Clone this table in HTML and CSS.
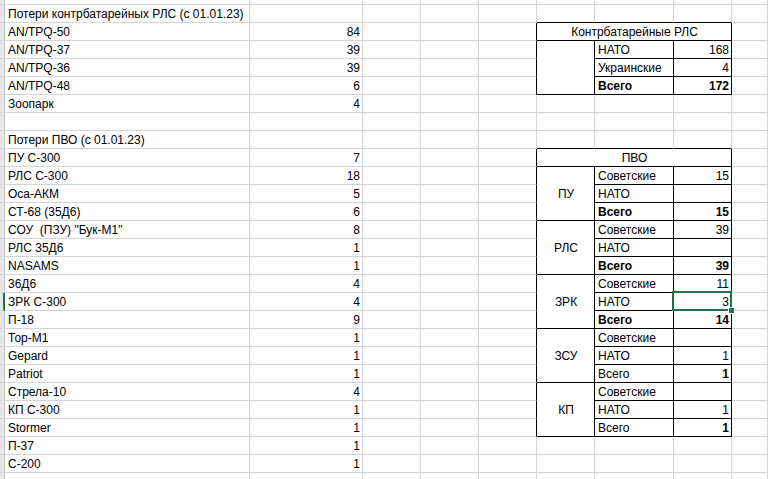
FILE: index.html
```html
<!DOCTYPE html>
<html lang="ru">
<head>
<meta charset="utf-8">
<title>Потери</title>
<link rel="stylesheet" href="styles.css">
</head>
<body>
<div class="sheet">
  <!-- row 0 (partial) -->
  <div class="c s"></div><div class="c"></div><div class="c"></div><div class="c"></div><div class="c"></div><div class="c"></div><div class="c"></div><div class="c"></div><div class="c"></div><div class="c"></div>
  <!-- row 1 -->
  <div class="c s"></div><div class="c">Потери контрбатарейных РЛС (с 01.01.23)</div><div class="c"></div><div class="c"></div><div class="c"></div><div class="c"></div><div class="c bb"></div><div class="c bb"></div><div class="c bb"></div><div class="c"></div>
  <!-- row 2 -->
  <div class="c s"></div><div class="c">AN/TPQ-50</div><div class="c num">84</div><div class="c"></div><div class="c"></div><div class="c br"></div><div class="c bx ctr span3c">Контрбатарейные РЛС</div><div class="c"></div>
  <!-- row 3 -->
  <div class="c s"></div><div class="c">AN/TPQ-37</div><div class="c num">39</div><div class="c"></div><div class="c"></div><div class="c br"></div><div class="c bx span3r"></div><div class="c bx">НАТО</div><div class="c bx num">168</div><div class="c"></div>
  <!-- row 4 -->
  <div class="c s"></div><div class="c">AN/TPQ-36</div><div class="c num">39</div><div class="c"></div><div class="c"></div><div class="c br"></div><div class="c bx">Украинские</div><div class="c bx num">4</div><div class="c"></div>
  <!-- row 5 -->
  <div class="c s"></div><div class="c">AN/TPQ-48</div><div class="c num">6</div><div class="c"></div><div class="c"></div><div class="c br"></div><div class="c bx b">Всего</div><div class="c bx num b">172</div><div class="c"></div>
  <!-- row 6 -->
  <div class="c s"></div><div class="c">Зоопарк</div><div class="c num">4</div><div class="c"></div><div class="c"></div><div class="c"></div><div class="c"></div><div class="c"></div><div class="c"></div><div class="c"></div>
  <!-- row 7 -->
  <div class="c s"></div><div class="c"></div><div class="c"></div><div class="c"></div><div class="c"></div><div class="c"></div><div class="c"></div><div class="c"></div><div class="c"></div><div class="c"></div>
  <!-- row 8 -->
  <div class="c s"></div><div class="c">Потери ПВО (с 01.01.23)</div><div class="c"></div><div class="c"></div><div class="c"></div><div class="c"></div><div class="c bb"></div><div class="c bb"></div><div class="c bb"></div><div class="c"></div>
  <!-- row 9 -->
  <div class="c s"></div><div class="c">ПУ С-300</div><div class="c num">7</div><div class="c"></div><div class="c"></div><div class="c br"></div><div class="c bx ctr span3c">ПВО</div><div class="c"></div>
  <!-- row 10 -->
  <div class="c s"></div><div class="c">РЛС С-300</div><div class="c num">18</div><div class="c"></div><div class="c"></div><div class="c br"></div><div class="c bx ctr mid span3r">ПУ</div><div class="c bx">Советские</div><div class="c bx num">15</div><div class="c"></div>
  <!-- row 11 -->
  <div class="c s"></div><div class="c">Оса-АКМ</div><div class="c num">5</div><div class="c"></div><div class="c"></div><div class="c br"></div><div class="c bx">НАТО</div><div class="c bx num"></div><div class="c"></div>
  <!-- row 12 -->
  <div class="c s"></div><div class="c">СТ-68 (35Д6)</div><div class="c num">6</div><div class="c"></div><div class="c"></div><div class="c br"></div><div class="c bx b">Всего</div><div class="c bx num b">15</div><div class="c"></div>
  <!-- row 13 -->
  <div class="c s"></div><div class="c">СОУ  (ПЗУ) "Бук-М1"</div><div class="c num">8</div><div class="c"></div><div class="c"></div><div class="c br"></div><div class="c bx ctr mid span3r">РЛС</div><div class="c bx">Советские</div><div class="c bx num">39</div><div class="c"></div>
  <!-- row 14 -->
  <div class="c s"></div><div class="c">РЛС 35Д6</div><div class="c num">1</div><div class="c"></div><div class="c"></div><div class="c br"></div><div class="c bx">НАТО</div><div class="c bx num"></div><div class="c"></div>
  <!-- row 15 -->
  <div class="c s"></div><div class="c">NASAMS</div><div class="c num">1</div><div class="c"></div><div class="c"></div><div class="c br"></div><div class="c bx b">Всего</div><div class="c bx num b">39</div><div class="c"></div>
  <!-- row 16 -->
  <div class="c s"></div><div class="c">36Д6</div><div class="c num">4</div><div class="c"></div><div class="c"></div><div class="c br"></div><div class="c bx ctr mid span3r">ЗРК</div><div class="c bx">Советские</div><div class="c bx num">11</div><div class="c"></div>
  <!-- row 17 (selected) -->
  <div class="c s sel-row"></div><div class="c">ЗРК С-300</div><div class="c num">4</div><div class="c"></div><div class="c"></div><div class="c br"></div><div class="c bx">НАТО</div><div class="c bx num active">3</div><div class="c"></div>
  <!-- row 18 -->
  <div class="c s"></div><div class="c">П-18</div><div class="c num">9</div><div class="c"></div><div class="c"></div><div class="c br"></div><div class="c bx b">Всего</div><div class="c bx num b">14</div><div class="c"></div>
  <!-- row 19 -->
  <div class="c s"></div><div class="c">Тор-М1</div><div class="c num">1</div><div class="c"></div><div class="c"></div><div class="c br"></div><div class="c bx ctr mid span3r">ЗСУ</div><div class="c bx">Советские</div><div class="c bx num"></div><div class="c"></div>
  <!-- row 20 -->
  <div class="c s"></div><div class="c">Gepard</div><div class="c num">1</div><div class="c"></div><div class="c"></div><div class="c br"></div><div class="c bx">НАТО</div><div class="c bx num">1</div><div class="c"></div>
  <!-- row 21 -->
  <div class="c s"></div><div class="c">Patriot</div><div class="c num">1</div><div class="c"></div><div class="c"></div><div class="c br"></div><div class="c bx">Всего</div><div class="c bx num b">1</div><div class="c"></div>
  <!-- row 22 -->
  <div class="c s"></div><div class="c">Стрела-10</div><div class="c num">4</div><div class="c"></div><div class="c"></div><div class="c br"></div><div class="c bx ctr mid span3r">КП</div><div class="c bx">Советские</div><div class="c bx num"></div><div class="c"></div>
  <!-- row 23 -->
  <div class="c s"></div><div class="c">КП С-300</div><div class="c num">1</div><div class="c"></div><div class="c"></div><div class="c br"></div><div class="c bx">НАТО</div><div class="c bx num">1</div><div class="c"></div>
  <!-- row 24 -->
  <div class="c s"></div><div class="c">Stormer</div><div class="c num">1</div><div class="c"></div><div class="c"></div><div class="c br"></div><div class="c bx">Всего</div><div class="c bx num b">1</div><div class="c"></div>
  <!-- row 25 -->
  <div class="c s"></div><div class="c">П-37</div><div class="c num">1</div><div class="c"></div><div class="c"></div><div class="c"></div><div class="c"></div><div class="c"></div><div class="c"></div><div class="c"></div>
  <!-- row 26 -->
  <div class="c s"></div><div class="c">С-200</div><div class="c num">1</div><div class="c"></div><div class="c"></div><div class="c"></div><div class="c"></div><div class="c"></div><div class="c"></div><div class="c"></div>
  <!-- row 27 (partial) -->
  <div class="c s"></div><div class="c"></div><div class="c"></div><div class="c"></div><div class="c"></div><div class="c"></div><div class="c"></div><div class="c"></div><div class="c"></div><div class="c"></div>
</div>
</body>
</html>
```

FILE: styles.css
```css
html, body {
  margin: 0;
  padding: 0;
  background: #ffffff;
  overflow: hidden;
}

body {
  font-family: "Liberation Sans", Arial, sans-serif;
  font-size: 12px;
  color: #000000;
}

.sheet {
  display: grid;
  grid-template-columns: 5px 245px 113px 58px 58px 58px 58px 79px 58px 1fr;
  grid-template-rows: 5px repeat(27, 18px);
  width: 768px;
  height: 479px;
  overflow: hidden;
}

.c {
  box-sizing: border-box;
  border-right: 1px solid #d4d4d4;
  border-bottom: 1px solid #d4d4d4;
  padding: 0 2px 1px 3px;
  display: flex;
  align-items: flex-end;
  line-height: 14px;
  white-space: pre;
  min-width: 0;
}

.s {
  background: #e6e6e6;
  border-right-color: #c6c6c6;
  padding: 0;
}

.s.sel-row {
  border-right: 2px solid #217346;
}

.num {
  justify-content: flex-end;
}

.ctr {
  justify-content: center;
}

.mid {
  align-items: center;
  padding-bottom: 0;
}

.b {
  font-weight: bold;
}

.bb {
  border-bottom-color: #000000;
}

.br {
  border-right-color: #000000;
}

.bx {
  border-right-color: #000000;
  border-bottom-color: #000000;
}

.span3c {
  grid-column: span 3;
}

.span3r {
  grid-row: span 3;
}

.active {
  position: relative;
}

.active::after {
  content: "";
  position: absolute;
  left: -2px;
  top: -2px;
  right: -1px;
  bottom: -1px;
  border: 2px solid #217346;
}

.active::before {
  content: "";
  position: absolute;
  right: -3px;
  bottom: -3px;
  width: 5px;
  height: 5px;
  background: #217346;
  box-shadow: 0 0 0 1px #ffffff;
  z-index: 1;
}
```
